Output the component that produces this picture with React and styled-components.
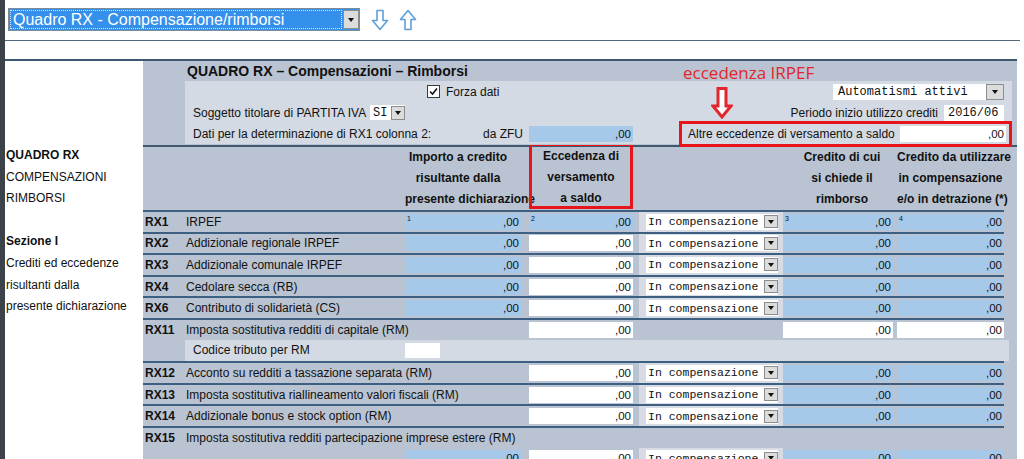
import React from 'react'
import styled, { createGlobalStyle } from 'styled-components'

const GlobalStyle = createGlobalStyle`
  html, body { margin: 0; padding: 0; background: #fff; }
  body {
    font-family: "Liberation Sans", Arial, sans-serif;
    font-size: 12px;
    color: #111;
  }
`

const PANEL = '#b9c3d1'
const LIGHT = '#d4dae3'
const BLUE = '#a6c9ea'
const LINE = '#3d5f81'
const RED = '#e8141c'

const Page = styled.div`
  height: 459px;
  overflow: hidden;
  border-left: 5px solid #3c424a;
  background: #fff;
`

const TopBar = styled.div`
  height: 40px;
  box-sizing: border-box;
  padding: 8px 0 0 3px;
  display: flex;
  align-items: flex-start;
`

const TopSelect = styled.div`
  width: 352px;
  height: 23px;
  box-sizing: border-box;
  border: 1px solid #7f8c99;
  background: #3490ea;
  display: flex;
  align-items: center;
`

const TopSelectText = styled.span`
  flex: 1;
  height: 19px;
  margin: 0 1px;
  box-sizing: border-box;
  border: 1px dotted #d9e8fb;
  color: #fff;
  font-size: 16px;
  line-height: 17px;
  padding-left: 2px;
`

const DropBtn = styled.span`
  width: ${p => p.$w || 16}px;
  height: ${p => p.$h || 19}px;
  box-sizing: border-box;
  background: #dcdcdc;
  border: 1px solid #8d8d8d;
  display: flex;
  align-items: center;
  justify-content: center;
  flex-shrink: 0;
  &::after {
    content: '';
    border-left: 3.5px solid transparent;
    border-right: 3.5px solid transparent;
    border-top: 4px solid #111;
  }
`

const ArrowGroup = styled.div`
  display: flex;
  gap: 10px;
  margin-left: 11px;
  margin-top: 1px;
`

const Rule = styled.div`
  height: 1px;
  background: #50697f;
  margin-right: 4px;
`

const Main = styled.div`
  margin-top: 18px;
  margin-right: 7px;
  border-top: 2px solid #3f5872;
`

const Split = styled.div`
  display: grid;
  grid-template-columns: 138px 874px;
  border-top: ${p => (p.$ruled ? '2px solid #40596f' : 'none')};
`

const LeftBlank = styled.div`
  background: #fff;
`

const TopPanel = styled.div`
  background: ${PANEL};
  position: relative;
  padding: 0 5px 1px 42px;
`

const Title = styled.div`
  height: 20px;
  line-height: 20px;
  font-size: 14px;
  font-weight: bold;
  padding-left: 2px;
`

const InnerBox = styled.div`
  background: ${LIGHT};
  height: 63px;
  padding: 0 8px;
`

const InnerRow = styled.div`
  height: 21px;
  display: flex;
  align-items: center;
  white-space: nowrap;
`

const Label = styled.span`
  width: ${p => (p.$w ? `${p.$w}px` : 'auto')};
  flex-shrink: 0;
  margin-left: ${p => (p.$push ? 'auto' : '0')};
  margin-right: ${p => p.$mr || 0}px;
`

const CheckWrap = styled.label`
  display: flex;
  align-items: center;
  gap: 6px;
  margin-left: ${p => p.$ml}px;
`

const CheckBox = styled.span`
  width: 13px;
  height: 13px;
  box-sizing: border-box;
  border: 1px solid #3a3a3a;
  background: #fff;
  display: flex;
  align-items: center;
  justify-content: center;
`

const MonoSelect = styled.div`
  width: ${p => p.$w}px;
  height: ${p => p.$h || 16}px;
  margin-left: ${p => (p.$push ? 'auto' : `${p.$ml || 0}px`)};
  background: #fff;
  display: flex;
  align-items: center;
  justify-content: space-between;
  font-family: "Liberation Mono", "Courier New", monospace;
  font-size: ${p => p.$fs || 12}px;
  padding-left: ${p => p.$pl || 2}px;
  box-sizing: border-box;
  flex-shrink: 0;
`

const Field = styled.div`
  width: ${p => p.$w}px;
  height: ${p => p.$h || 16}px;
  margin-left: ${p => (p.$push ? 'auto' : '0')};
  background: ${p => (p.$tone === 'white' ? '#fff' : BLUE)};
  display: flex;
  justify-content: space-between;
  align-items: center;
  padding: 0 2px 0 2px;
  box-sizing: border-box;
  font-size: 11.5px;
  flex-shrink: 0;
`

const Sup = styled.span`
  align-self: flex-start;
  font-size: 7px;
  line-height: 9px;
`

const RedGroup = styled.div`
  width: 333px;
  height: 26px;
  margin-left: auto;
  margin-right: -8px;
  box-sizing: border-box;
  border: 3px solid ${RED};
  display: flex;
  align-items: center;
  padding: 0 3px 0 6px;
`

const Annotation = styled.div`
  position: absolute;
  left: 540px;
  top: 1px;
  font-family: "Open Sans", "Liberation Sans", sans-serif;
  font-size: 17px;
  color: #e3262c;
  line-height: 22px;
`

const AnnotationArrow = styled.svg`
  position: absolute;
  left: 568px;
  top: 26px;
`

const Notes = styled.div`
  background: #fff;
  padding-left: 1px;
  margin-top: -2px;
  line-height: 21.6px;
`

const NoteLine = styled.div`
  font-weight: ${p => (p.$bold ? 'bold' : 'normal')};
  height: 21.6px;
`

const Table = styled.div`
  background: ${PANEL};
  padding-right: 13px;
  min-height: 320px;
`

const COLS = '42px 220px 124px 110px 144px 114px 107px'

const HeaderRow = styled.div`
  display: grid;
  grid-template-columns: ${COLS};
  height: 63px;
  font-weight: bold;
  line-height: 21px;
  white-space: nowrap;
`

const HeadCell = styled.div`
  grid-column: ${p => p.$col};
  text-align: center;
  padding-right: ${p => p.$pr || 0}px;
  width: ${p => (p.$w ? `${p.$w}px` : 'auto')};
`

const RedHead = styled.div`
  grid-column: 4;
  width: 104px;
  height: 66px;
  margin-top: -4px;
  box-sizing: border-box;
  border: 3px solid ${RED};
  text-align: center;
`

const Row = styled.div`
  display: grid;
  grid-template-columns: ${COLS};
  grid-template-rows: 1fr;
  height: 21.6px;
  box-sizing: border-box;
  border-top: ${p => (p.$plain ? 'none' : `2px solid ${LINE}`)};
  align-items: center;
  white-space: nowrap;
`

const Code = styled.div`
  grid-area: 1 / 1;
  font-weight: bold;
  padding-left: 2px;
`

const Desc = styled.div`
  grid-row: 1;
  grid-column: ${p => (p.$span ? `2 / span ${p.$span}` : '2')};
  padding-left: 1px;
`

const Cell = styled.div`
  grid-row: 1;
  grid-column: ${p => p.$col};
  display: flex;
  align-items: center;
`

const SelCell = styled.div`
  grid-area: 1 / 5;
  align-self: stretch;
  background: #d6dbe4;
  display: flex;
  align-items: center;
`

const Band = styled.div`
  grid-area: 1 / 2 / 2 / -1;
  margin-right: -5px;
  align-self: stretch;
  background: ${LIGHT};
  display: flex;
  align-items: center;
  padding-left: 8px;
`

const DownArrow = () => (
  <svg width="18" height="22" viewBox="0 0 18 22">
    <path d="M6 1.5 H12 V11.5 H16.5 L9 20.5 L1.5 11.5 H6 Z" fill="#fff" stroke="#5f9fd8" strokeWidth="1.6" strokeLinejoin="round" />
  </svg>
)

const UpArrow = () => (
  <svg width="18" height="22" viewBox="0 0 18 22">
    <path d="M6 20.5 H12 V10.5 H16.5 L9 1.5 L1.5 10.5 H6 Z" fill="#fff" stroke="#5f9fd8" strokeWidth="1.6" strokeLinejoin="round" />
  </svg>
)

const Amount = ({ tone, w, sup, push }) => (
  <Field $tone={tone} $w={w} $push={push}>
    <Sup>{sup || ''}</Sup>
    <span>,00</span>
  </Field>
)

const RowSelect = () => (
  <MonoSelect $w={132} $ml={7} $fs={11.5}>
    <span>In compensazione</span>
    <DropBtn $w={14} $h={13} />
  </MonoSelect>
)

const Values = ({ r }) => (
  <>
    {r.c1 && (
      <Cell $col={3}>
        <Amount tone={r.c1} w={116} sup={r.sup && '1'} />
      </Cell>
    )}
    <Cell $col={4}>
      <Amount tone={r.c2} w={104} sup={r.sup && '2'} />
    </Cell>
    {r.sel && (
      <SelCell>
        <RowSelect />
      </SelCell>
    )}
    <Cell $col={6}>
      <Amount tone={r.c3} w={110} sup={r.sup && '3'} />
    </Cell>
    <Cell $col={7}>
      <Amount tone={r.c4} w={107} sup={r.sup && '4'} />
    </Cell>
  </>
)

const std = { c1: 'blue', c2: 'white', sel: true, c3: 'blue', c4: 'blue' }
const rm = { c1: null, c2: 'white', sel: true, c3: 'blue', c4: 'blue' }

const upperRows = [
  { code: 'RX1', desc: 'IRPEF', ...std, c2: 'blue', sup: true },
  { code: 'RX2', desc: 'Addizionale regionale IRPEF', ...std },
  { code: 'RX3', desc: 'Addizionale comunale IRPEF', ...std },
  { code: 'RX4', desc: 'Cedolare secca (RB)', ...std },
  { code: 'RX6', desc: 'Contributo di solidarietà (CS)', ...std },
  { code: 'RX11', desc: 'Imposta sostitutiva redditi di capitale (RM)', c1: null, c2: 'white', sel: false, c3: 'white', c4: 'white' },
]

const lowerRows = [
  { code: 'RX12', desc: 'Acconto su redditi a tassazione separata (RM)', ...rm },
  { code: 'RX13', desc: 'Imposta sostitutiva riallineamento valori fiscali (RM)', ...rm },
  { code: 'RX14', desc: 'Addizionale bonus e stock option (RM)', ...rm },
]

export default function App() {
  return (
    <Page>
      <GlobalStyle />
      <TopBar>
        <TopSelect>
          <TopSelectText>Quadro RX - Compensazione/rimborsi</TopSelectText>
          <DropBtn />
        </TopSelect>
        <ArrowGroup>
          <DownArrow />
          <UpArrow />
        </ArrowGroup>
      </TopBar>
      <Rule />

      <Main>
        <Split>
          <LeftBlank />
          <TopPanel>
            <Title>QUADRO RX – Compensazioni – Rimborsi</Title>
            <InnerBox>
              <InnerRow>
                <CheckWrap $ml={234}>
                  <CheckBox>
                    <svg width="9" height="9" viewBox="0 0 9 9">
                      <path d="M1 4.5 L3.5 7 L8 1.5" fill="none" stroke="#111" strokeWidth="1.6" />
                    </svg>
                  </CheckBox>
                  Forza dati
                </CheckWrap>
                <MonoSelect $w={171} $push $pl={5}>
                  <span>Automatismi attivi</span>
                  <DropBtn $w={18} $h={16} />
                </MonoSelect>
              </InnerRow>
              <InnerRow>
                <Label $w={177}>Soggetto titolare di PARTITA IVA</Label>
                <MonoSelect $w={35} $h={15} $pl={3}>
                  <span>SI</span>
                  <DropBtn $w={14} $h={14} />
                </MonoSelect>
                <Label $push $mr={6}>Periodo inizio utilizzo crediti</Label>
                <MonoSelect $w={60} $pl={4}>
                  <span>2016/06</span>
                </MonoSelect>
              </InnerRow>
              <InnerRow>
                <Label $w={290}>Dati per la determinazione di RX1 colonna 2:</Label>
                <Label $w={46}>da ZFU</Label>
                <Amount tone="blue" w={104} />
                <RedGroup>
                  <span>Altre eccedenze di versamento a saldo</span>
                  <Amount tone="white" w={106} push />
                </RedGroup>
              </InnerRow>
            </InnerBox>
            <Annotation>eccedenza IRPEF</Annotation>
            <AnnotationArrow width="22" height="32" viewBox="0 0 22 32">
              <path d="M7 1.5 H15 V19 H20 L11 30 L2 19 H7 Z" fill="#fff" stroke="#e3262c" strokeWidth="3" strokeLinejoin="miter" />
            </AnnotationArrow>
          </TopPanel>
        </Split>

        <Split $ruled>
          <Notes>
            <NoteLine $bold>QUADRO RX</NoteLine>
            <NoteLine>COMPENSAZIONI</NoteLine>
            <NoteLine>RIMBORSI</NoteLine>
            <NoteLine />
            <NoteLine $bold>Sezione I</NoteLine>
            <NoteLine>Crediti ed eccedenze</NoteLine>
            <NoteLine>risultanti dalla</NoteLine>
            <NoteLine>presente dichiarazione</NoteLine>
          </Notes>
          <Table>
            <HeaderRow>
              <HeadCell $col={3} $pr={18}>
                Importo a credito<br />risultante dalla<br />presente dichiarazione
              </HeadCell>
              <RedHead>
                Eccedenza di<br />versamento<br />a saldo
              </RedHead>
              <HeadCell $col={6} $w={118}>
                Credito di cui<br />si chiede il<br />rimborso
              </HeadCell>
              <HeadCell $col={7}>
                Credito da utilizzare<br />in compensazione<br />e/o in detrazione (*)
              </HeadCell>
            </HeaderRow>

            {upperRows.map(r => (
              <Row key={r.code}>
                <Code>{r.code}</Code>
                <Desc $span={r.c1 ? 0 : 2}>{r.desc}</Desc>
                <Values r={r} />
              </Row>
            ))}

            <Row $plain>
              <Band>
                <Label $w={212}>Codice tributo per RM</Label>
                <Field $tone="white" $w={35} $h={15} />
              </Band>
            </Row>

            {lowerRows.map(r => (
              <Row key={r.code}>
                <Code>{r.code}</Code>
                <Desc $span={2}>{r.desc}</Desc>
                <Values r={r} />
              </Row>
            ))}

            <Row>
              <Code>RX15</Code>
              <Desc $span={6}>Imposta sostitutiva redditi partecipazione imprese estere (RM)</Desc>
            </Row>
            <Row $plain>
              <Values r={std} />
            </Row>
          </Table>
        </Split>
      </Main>
    </Page>
  )
}
